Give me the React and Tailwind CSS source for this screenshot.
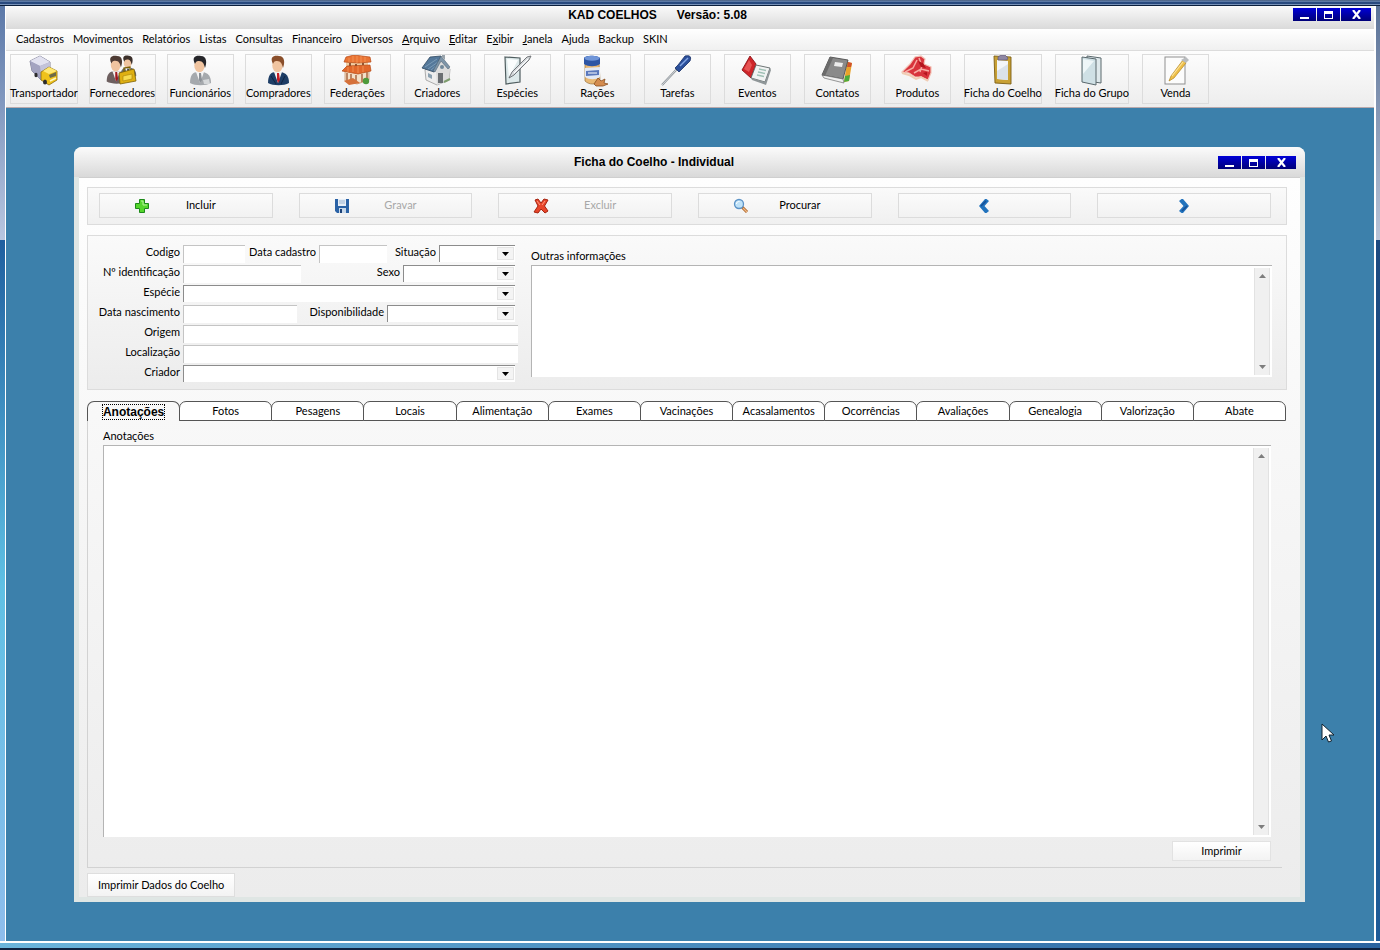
import { useState } from "react";

const svgProps = { width: 32, height: 32, viewBox: "0 0 32 32", "aria-hidden": true };

const TruckIcon = () => (
  <svg {...svgProps}>
    <path d="M2 6 L12 1 L22 7 L22 19 L13 25 L4 16 Z" fill="#a9a9c6" stroke="#6c6c84" strokeWidth=".8" />
    <path d="M2 6 L12 1 L22 7 L12 11 Z" fill="#e2e2f0" />
    <path d="M2 6 L12 11 L13 25 L4 16 Z" fill="#a3a3c0" />
    <path d="M12 11 L22 7 L22 13 L13 18 Z" fill="#c3c3da" />
    <path d="M13 17 L21 12 L29 16 L29 25 L21 30 L13 25 Z" fill="#efc21a" stroke="#8a6a0c" strokeWidth=".8" />
    <path d="M15 16 L21 12 L29 16 L21 19 Z" fill="#ffe873" />
    <path d="M21 20 L28 17 L28 21 L22 23 Z" fill="#6d6a48" />
    <path d="M22 26 L28 23" stroke="#fff6c0" strokeWidth="1.6" />
    <ellipse cx="17" cy="27" rx="2" ry="2.6" fill="#2c2c2c" />
    <ellipse cx="8" cy="20" rx="1.6" ry="2.2" fill="#2c2c2c" />
  </svg>
);

const Person = ({ hair, coat, tie }) => (
  <g>
    <path d="M6 28 C6 20 9 17 14 17 L19 17 C24 18 27 21 27 28 C22 31 11 31 6 28 Z" fill={coat} />
    <path d="M12 17 L16 28 L20 17 Z" fill="#f4f4f4" />
    <path d="M15 18 L17 18 L18 25 L16 28 L15 25 Z" fill={tie} />
    <ellipse cx="15.5" cy="10.5" rx="5.2" ry="6.8" fill="#f0c4a0" />
    <path d="M11 9 C7 1 13 0 17 1 C23 1 23 8 21 13 C20 9 19 6 15 6 C12 6 12 7 11 9 Z" fill={hair} />
  </g>
);

const SuppliersIcon = () => (
  <svg {...svgProps}>
    <g transform="translate(10 0) scale(.75)">
      <Person hair="#3b2f2a" coat="#6b6b6b" tie="#333" />
    </g>
    <g transform="translate(-5 0) scale(.95)">
      <Person hair="#4d3a33" coat="#6d5f5f" tie="#a01820" />
    </g>
    <path d="M13 18 L28 14 L30 26 L14 29 Z" fill="#dfb012" stroke="#7d6208" strokeWidth=".8" />
    <path d="M18 17 L18 13 L24 12 L24 15" fill="none" stroke="#7d6208" strokeWidth="1.3" />
    <path d="M17 21 L26 19 L26 24 L17 26 Z" fill="#f7dc50" stroke="#a98208" strokeWidth=".6" />
  </svg>
);

const EmployeeIcon = () => (
  <svg {...svgProps}>
    <Person hair="#26262a" coat="#a5a9ad" tie="#8b9096" />
    <path d="M19 25 L25 24 L26 29 L20 29 Z" fill="#d5d8da" />
  </svg>
);

const BuyerIcon = () => (
  <svg {...svgProps}>
    <Person hair="#8a4f2b" coat="#1d3d66" tie="#c41c24" />
    <path d="M9 21 L14 29 M23 21 L19 29" stroke="#0e2442" strokeWidth="1" />
  </svg>
);

const FederationIcon = () => (
  <svg {...svgProps}>
    <path d="M4 13 L28 13 L28 25 L16 29 L4 26 Z" fill="#f3e0c8" stroke="#c2865a" strokeWidth=".7" />
    <path d="M5 6 L27 6 L27 13 L5 13 Z" fill="#f0cda4" />
    <path d="M5 2 L13 0 L29 2 L30 7 L17 8 L3 7 Z" fill="#ea7434" stroke="#b64a16" strokeWidth=".7" />
    <path d="M1 16 L6 11 L29 10 L30 16 L17 19 Z" fill="#e2672a" stroke="#b64a16" strokeWidth=".7" />
    <path d="M8 3v4 M12 1v6 M16 1v7 M20 1v7 M24 2v5 M7 12v5 M12 11v6 M17 11v7 M22 11v6" stroke="#f59a5c" strokeWidth=".8" />
    <path d="M6 18v8 M10 19v8 M15 20v8 M21 19v8 M26 17v8" stroke="#a35f38" strokeWidth="1.4" />
    <path d="M9 8v3 M15 9v2 M22 8v2" stroke="#8d4b28" strokeWidth="1.8" />
    <path d="M3 26 L12 23 L19 28 L8 30 Z" fill="#d5713a" />
    <circle cx="25" cy="26" r="3.2" fill="#4d9a3a" />
  </svg>
);

const HouseIcon = () => (
  <svg {...svgProps}>
    <path d="M4 15 L16 5 L29 14 L28 25 L16 30 L5 25 Z" fill="#ededed" stroke="#9b9b9b" strokeWidth=".8" />
    <path d="M15 17 L21 4 L29 14 L28 25 L16 30 Z" fill="#dcdcdc" />
    <path d="M1 13 L9 2 L20 1 L13 17 Z" fill="#54789a" stroke="#2e4860" strokeWidth=".8" />
    <path d="M4 12 L16 4 M7 14 L17 7 M10 15 L16 10" stroke="#83a2bd" strokeWidth=".8" />
    <path d="M20 1 L29 12 L27 14 L20 6 L14 17 L12 16 Z" fill="#7e95a8" stroke="#45586a" strokeWidth=".5" />
    <path d="M21 0h3v5l-3-3z" fill="#9aa4ab" />
    <rect x="17" y="18" width="5" height="10" fill="#6a6e72" />
    <circle cx="21" cy="12" r="2" fill="#6f8799" />
    <path d="M7 18 L11 20 L11 24 L7 22 Z" fill="#8ba1b1" />
    <path d="M23 27 L29 24" stroke="#7d9c6d" strokeWidth="2" />
  </svg>
);

const SpeciesIcon = () => (
  <svg {...svgProps}>
    <path d="M4 2 L19 3 L19 27 L5 29 Z" fill="#dde9ea" stroke="#4f5d5f" strokeWidth="1.2" />
    <path d="M6 4 L17 5 L8 22 Z" fill="#fafdfd" />
    <path d="M8 23 L11 17 L26 2 L30 1 L28 5 L13 20 Z" fill="#d7dbde" stroke="#65696c" strokeWidth=".9" />
    <path d="M13 18 L27 4" stroke="#fff" strokeWidth="1" />
  </svg>
);

const FeedIcon = () => (
  <svg {...svgProps}>
    <path d="M4 8 L18 8 L19 26 C15 30 8 30 4 26 Z" fill="#e9b873" stroke="#96703b" strokeWidth=".7" />
    <path d="M4 13 L19 12 L19 22 C15 25 8 25 4 22 Z" fill="#e3e9f5" />
    <path d="M5 16 L18 15 L18 20 L5 21 Z" fill="#5b78bc" />
    <path d="M7 18h9" stroke="#fff" strokeWidth="1" />
    <path d="M3 3 C4 0 17 0 19 3 L19 9 C15 12 7 12 3 9 Z" fill="#2d55a4" />
    <ellipse cx="11" cy="3.3" rx="7.5" ry="2.5" fill="#6f95d8" />
    <path d="M13 29 L17 23 L20 26 L24 24 L23 28 L27 29 L22 31 L15 31 Z" fill="#d48c4f" stroke="#8a4f20" strokeWidth=".8" />
  </svg>
);

const ScrewdriverIcon = () => (
  <svg {...svgProps}>
    <path d="M1 30 L16 14" stroke="#8a9095" strokeWidth="2" />
    <path d="M1 30 L15 15" stroke="#dde1e4" strokeWidth=".9" />
    <path d="M14 13 L18 17 L21 14 L29 6 C31 1 28 0 24 1 L17 10 Z" fill="#2b4f9a" stroke="#172f66" strokeWidth=".8" />
    <path d="M19 11 L27 3" stroke="#83a6e4" strokeWidth="1.5" />
  </svg>
);

const EventsIcon = () => (
  <svg {...svgProps}>
    <path d="M1 15 L9 1 L15 9 L10 23 Z" fill="#cf2529" stroke="#8c1216" strokeWidth=".9" />
    <path d="M3 14 L8 5 L11 10 L8 17 Z" fill="#e65454" />
    <path d="M10 23 L15 10 L29 13 L24 27 Z" fill="#f1f3f3" stroke="#5f6668" strokeWidth=".9" />
    <path d="M10 23 L24 27 L29 13 L30 15 L25 30 L11 25 Z" fill="#8f9698" />
    <path d="M18 14l7 1.5 M17 17l7 1.5 M16 20l7 1.5" stroke="#9fc0b5" strokeWidth="1.3" />
  </svg>
);

const ContactsIcon = () => (
  <svg {...svgProps}>
    <path d="M26 7 L31 8 L28 26 L23 27 Z" fill="#e9a32a" />
    <path d="M27 7 L31 8 L30 12 L26 12 Z" fill="#d0522c" />
    <path d="M24 21 L29 20 L28 26 L23 27 Z" fill="#4dab3a" />
    <path d="M9 2 L27 5 L22 24 L1 20 Z" fill="#8a8a8a" stroke="#4d4d4d" strokeWidth=".9" />
    <path d="M1 20 L22 24 L23 28 L3 23 Z" fill="#f0f0f0" stroke="#6d6d6d" strokeWidth=".7" />
    <path d="M9 2 L12 3 L4 21 L1 20 Z" fill="#6b6b6b" />
    <path d="M14 7 L22 8 L21 12 L13 11 Z" fill="#ececec" />
  </svg>
);

const MeatIcon = () => (
  <svg {...svgProps}>
    <path d="M1 17 L9 9 L14 2 L20 1 L24 4 L23 9 L30 12 L30 18 L27 25 L20 22 L14 22 L8 18 Z" fill="#d8343c" stroke="#f3c3b6" strokeWidth="1.2" />
    <path d="M4 17 L12 13 L16 5 M18 3 L21 11 L19 17 M13 18 L20 14 L28 16" fill="none" stroke="#f7aaa2" strokeWidth="1.5" />
    <path d="M1 18 L8 20 L15 24 L20 22 L27 26" fill="none" stroke="#f0cdb4" strokeWidth="2" />
    <path d="M17 6 L22 8 L25 13 L20 12 Z M22 18 L26 17 L26 21 Z" fill="#b3151d" />
  </svg>
);

const ClipboardIcon = () => (
  <svg {...svgProps}>
    <path d="M7 1 L24 2 L24 29 L8 28 Z" fill="#c8a034" stroke="#7c5d14" strokeWidth=".9" />
    <path d="M10 5 L21 6 L21 25 L10 24 Z" fill="#f3f5f8" />
    <path d="M10 16 L21 9 L21 25 L10 24 Z" fill="#dbe2ea" />
    <path d="M11 2 L14 0 L18 0 L21 3 L20 5 L11 5 Z" fill="#8f87a3" stroke="#5f5874" strokeWidth=".7" />
  </svg>
);

const GroupIcon = () => (
  <svg {...svgProps}>
    <path d="M11 1 L25 3 L25 28 L11 26 Z" fill="#dfe9ec" stroke="#5a686d" strokeWidth="1" />
    <path d="M6 2 L20 4 L20 30 L6 27 Z" fill="#cfe0e5" stroke="#5a686d" strokeWidth="1" />
    <path d="M7 4 L18 6 L7 19 Z" fill="#eef6f8" />
  </svg>
);

const SaleIcon = () => (
  <svg {...svgProps}>
    <rect x="5" y="2" width="20" height="27" fill="#fcfcfc" stroke="#8f8f8f" />
    <path d="M9 26 L11 21 L23 5 L26 8 L14 23 Z" fill="#eebf48" stroke="#b28420" strokeWidth=".7" />
    <path d="M21 5 L26 2 L29 5 L26 8 Z" fill="#b9bcbf" />
    <path d="M12 21 L23 7" stroke="#fbe39c" strokeWidth="1.2" />
  </svg>
);

const PlusIcon = () => (
  <svg width="16" height="16" viewBox="0 0 16 16" aria-hidden="true">
    <path d="M5.5 1.5h5v4h4v5h-4v4h-5v-4h-4v-5h4z" fill="#55d62c" stroke="#1d8a1a" />
    <path d="M7 3h2v4h4" fill="none" stroke="#b5f59a" />
  </svg>
);

const SaveIcon = () => (
  <svg width="16" height="16" viewBox="0 0 16 16" aria-hidden="true">
    <path d="M1 1h14v14H3l-2-2z" fill="#2a62a6" />
    <path d="M4 1h8v7H4z" fill="#e6eef7" />
    <path d="M5 3h6M5 5h6" stroke="#9bb4d2" />
    <path d="M5 10h7v5H5z" fill="#c9d9ea" />
    <path d="M6 11h2v4H6z" fill="#1b4177" />
  </svg>
);

const DeleteIcon = () => (
  <svg width="16" height="16" viewBox="0 0 16 16" aria-hidden="true">
    <path d="M2 2l3-1 3 4 3-4 4 1-3.5 6 3.5 5-3 2-4-4-3 4-4-1 4-6z" fill="#e8452a" stroke="#a4230f" />
    <path d="M4 3l3 4M12 3l-3 4" stroke="#ff9a80" />
  </svg>
);

const SearchIcon = () => (
  <svg width="16" height="16" viewBox="0 0 16 16" aria-hidden="true">
    <path d="M9 9l5 5" stroke="#a85f20" strokeWidth="3" />
    <path d="M10 10l4 4" stroke="#f0b884" strokeWidth="1.5" />
    <circle cx="6" cy="6" r="4.5" fill="#bfe2f8" stroke="#5c93c7" strokeWidth="1.3" />
    <path d="M3.5 6a2.5 2.5 0 0 1 3-2.5" fill="none" stroke="#fff" />
  </svg>
);

const Chevron = ({ flip }) => (
  <svg width="16" height="16" viewBox="0 0 16 16" aria-hidden="true" className={flip ? "rotate-180" : ""}>
    <path d="M3 8l6-7h1.5L13 3 8.500 8l4.500 5-2.500 2H9z" fill="#2273bd" />
    <path d="M5 8l5-5" stroke="#174f96" strokeWidth="1.5" />
  </svg>
);

const menus = [
  ["Cadastros"], ["Movimentos"], ["Relatórios"], ["Listas"], ["Consultas"], ["Financeiro"], ["Diversos"],
  ["Arquivo", 0], ["Editar", 0], ["Exibir", 1], ["Janela", 0], ["Ajuda"], ["Backup"], ["SKIN"],
];

const shortcutsLeft = [
  ["Transportador", TruckIcon],
  ["Fornecedores", SuppliersIcon],
  ["Funcionários", EmployeeIcon],
  ["Compradores", BuyerIcon],
];

const shortcutsRight = [
  ["Federações", FederationIcon],
  ["Criadores", HouseIcon],
  ["Espécies", SpeciesIcon],
  ["Rações", FeedIcon],
  ["Tarefas", ScrewdriverIcon],
  ["Eventos", EventsIcon],
  ["Contatos", ContactsIcon],
  ["Produtos", MeatIcon],
  ["Ficha do Coelho", ClipboardIcon],
  ["Ficha do Grupo", GroupIcon],
  ["Venda", SaleIcon],
];

const actions = [
  { label: "Incluir", icon: <PlusIcon /> },
  { label: "Gravar", icon: <SaveIcon />, disabled: true },
  { label: "Excluir", icon: <DeleteIcon />, disabled: true },
  { label: "Procurar", icon: <SearchIcon /> },
];

const tabs = [
  "Anotações", "Fotos", "Pesagens", "Locais", "Alimentação", "Exames", "Vacinações",
  "Acasalamentos", "Ocorrências", "Avaliações", "Genealogia", "Valorização", "Abate",
];

const WindowButtons = () => (
  <div className="flex gap-px text-white">
    <button aria-label="Minimizar" className="flex h-[13px] w-[23px] items-center justify-center bg-linear-to-b from-[#0000d8] to-[#000078]">
      <svg width="9" height="9" viewBox="0 0 9 9"><path d="M0 7h9v2H0z" fill="#fff" /></svg>
    </button>
    <button aria-label="Maximizar" className="flex h-[13px] w-[23px] items-center justify-center bg-linear-to-b from-[#0000d8] to-[#000078]">
      <svg width="9" height="9" viewBox="0 0 9 9"><path d="M0 1h9v8H0zM1 4v4h7V4z" fill="#fff" fillRule="evenodd" /></svg>
    </button>
    <button aria-label="Fechar" className="flex h-[13px] w-[30px] items-center justify-center bg-linear-to-b from-[#0000d8] to-[#000078]">
      <svg width="9" height="9" viewBox="0 0 9 9"><path d="M1 0l7 9M8 0L1 9" stroke="#fff" strokeWidth="2.2" /></svg>
    </button>
  </div>
);

const Shortcut = ({ label, Icon }) => (
  <button className="flex h-[50px] min-w-[67px] flex-col items-center border border-[#dcdcdc] whitespace-nowrap">
    <Icon />
    <span className="-mx-px leading-3">{label}</span>
  </button>
);

const Field = ({ id, label, labelClass, className }) => (
  <>
    <label htmlFor={id} className={`shrink-0 pr-[3px] text-right whitespace-nowrap ${labelClass}`}>{label}</label>
    <input id={id} type="text" className={`h-[18px] border-t border-l border-[#c4c4c4] bg-white outline-none ${className}`} />
  </>
);

const SelectField = ({ id, label, labelClass, className }) => (
  <>
    <label htmlFor={id} className={`shrink-0 pr-[3px] text-right whitespace-nowrap ${labelClass}`}>{label}</label>
    <span className={`relative mr-[3px] flex h-[17px] ${className}`}>
      <select id={id} className="w-full appearance-none border-t border-l border-[#8c8c8c] bg-white outline-none" />
      <span className="pointer-events-none absolute inset-y-[2px] right-px flex w-[17px] items-center justify-center border border-[#e4e4e4] bg-[#f4f4f4]">
        <svg width="7" height="4" viewBox="0 0 7 4"><path d="M0 0h7L3.5 4z" fill="#000" /></svg>
      </span>
    </span>
  </>
);

const ScrollBar = () => (
  <div className="my-[2px] mr-[2px] flex w-4 flex-col items-center justify-between border-x border-[#e2e2e2] bg-[#f0f0f0] py-[6px]">
    <svg width="7" height="4" viewBox="0 0 7 4"><path d="M0 4h7L3.5 0z" fill="#7d7d7d" /></svg>
    <svg width="7" height="4" viewBox="0 0 7 4"><path d="M0 0h7L3.5 4z" fill="#7d7d7d" /></svg>
  </div>
);

const RecordForm = () => (
  <section className="mr-[13px] ml-2 flex border border-[#dcdcdc] bg-linear-to-b from-[#fafafa] to-[#ececec] pt-[9px] pr-[14px] pb-[6px]">
    <div className="flex w-[430px] flex-col gap-[2px] leading-[14px]">
      <div className="flex h-[18px]">
        <Field id="codigo" label="Codigo" labelClass="w-[95px]" className="w-[62px]" />
        <Field id="cadastro" label="Data cadastro" labelClass="w-[74px]" className="w-[68px]" />
        <SelectField id="situacao" label="Situação" labelClass="w-[52px]" className="flex-1" />
      </div>
      <div className="flex h-[18px]">
        <Field id="identificacao" label="Nº identificação" labelClass="w-[95px]" className="w-[118px]" />
        <SelectField id="sexo" label="Sexo" labelClass="w-[102px]" className="flex-1" />
      </div>
      <div className="flex h-[18px]">
        <SelectField id="especie" label="Espécie" labelClass="w-[95px]" className="flex-1" />
      </div>
      <div className="flex h-[18px]">
        <Field id="nascimento" label="Data nascimento" labelClass="w-[95px]" className="w-[114px]" />
        <SelectField id="disponibilidade" label="Disponibilidade" labelClass="w-[90px]" className="flex-1" />
      </div>
      <div className="flex h-[18px]">
        <Field id="origem" label="Origem" labelClass="w-[95px]" className="flex-1" />
      </div>
      <div className="flex h-[18px]">
        <Field id="localizacao" label="Localização" labelClass="w-[95px]" className="flex-1" />
      </div>
      <div className="flex h-[18px]">
        <SelectField id="criador" label="Criador" labelClass="w-[95px]" className="flex-1" />
      </div>
    </div>
    <div className="flex flex-1 flex-col pt-1 pb-[6px] pl-[13px]">
      <label htmlFor="outras" className="pb-[2px] leading-[14px]">Outras informações</label>
      <div className="flex flex-1 border-t border-l border-[#b4b4b4] bg-white">
        <textarea id="outras" className="flex-1 resize-none outline-none" />
        <ScrollBar />
      </div>
    </div>
  </section>
);

const RecordWindow = () => {
  const [active, setActive] = useState("Anotações");

  return (
    <div className="flex flex-1 flex-col rounded-t-lg bg-[#dfe6e4]">
      <header className="flex h-[30px] items-center rounded-t-lg bg-linear-to-b from-[#fbfbfb] to-[#d9d9d9] pr-[9px] pl-4">
        <h2 className="flex-1 text-center font-['Liberation_Sans',sans-serif] text-[12px] font-bold">Ficha do Coelho - Individual</h2>
        <WindowButtons />
      </header>

      <div className="mx-[5px] mb-[5px] flex flex-1 flex-col border-t border-[#cfcfcf] bg-linear-to-b from-[#fefefe] to-[#ececec]">
        <div className="mt-[9px] mr-[13px] ml-2 grid grid-cols-6 border border-[#dcdcdc] bg-linear-to-b from-[#fafafa] to-[#f0f0f0] pt-[5px] pb-[6px]">
          {actions.map((a) => (
            <button
              key={a.label}
              disabled={a.disabled}
              className="mr-[15px] ml-[11px] flex h-[25px] items-center border border-[#dcdcdc] bg-linear-to-b from-[#fbfbfb] to-[#f2f2f2] pl-[34px] disabled:text-[#a8a8a8]"
            >
              {a.icon}
              <span className="flex-1 pr-5 text-center">{a.label}</span>
            </button>
          ))}
          <button aria-label="Anterior" className="mr-[15px] ml-[11px] flex h-[25px] items-center justify-center border border-[#dcdcdc] bg-linear-to-b from-[#fbfbfb] to-[#f2f2f2]">
            <Chevron />
          </button>
          <button aria-label="Próximo" className="mr-[15px] ml-[11px] flex h-[25px] items-center justify-center border border-[#dcdcdc] bg-linear-to-b from-[#fbfbfb] to-[#f2f2f2]">
            <Chevron flip />
          </button>
        </div>

        <div className="h-[10px]" />
        <RecordForm />

        <div role="tablist" className="mt-[11px] mr-[15px] ml-2 flex">
          {tabs.map((tab) => (
            <button
              key={tab}
              role="tab"
              aria-selected={tab === active}
              onClick={() => setActive(tab)}
              className={
                tab === active
                  ? "-mr-px h-5 flex-1 rounded-t-[7px] border border-b-0 border-[#555] font-['Liberation_Sans',sans-serif] text-[12px] font-bold"
                  : "-mr-px h-5 flex-1 rounded-t-[7px] border border-[#555] bg-white"
              }
            >
              <span className={tab === active ? "outline-1 outline-dotted outline-black" : ""}>{tab}</span>
            </button>
          ))}
        </div>

        <div role="tabpanel" className="mr-[18px] ml-2 flex flex-1 flex-col border-b border-l border-[#d2d2d2] pr-[11px] pb-[6px] pl-[15px]">
          <label htmlFor="anotacoes" className="pt-[7px] pb-px leading-4">{active}</label>
          <div className="flex flex-1 border-t border-l border-[#b4b4b4] bg-white">
            <textarea id="anotacoes" className="flex-1 resize-none outline-none" />
            <ScrollBar />
          </div>
          <button className="mt-1 h-5 w-[99px] self-end border border-[#e2e2e2] bg-linear-to-b from-white to-[#f3f3f3]">
            Imprimir
          </button>
        </div>

        <button className="mt-[5px] ml-2 h-6 self-start border border-[#dedede] bg-linear-to-b from-white to-[#f3f3f3] px-[10px]">
          Imprimir Dados do Coelho
        </button>
      </div>
    </div>
  );
};

const App = () => (
  <div className="flex min-h-screen flex-col bg-[#265c95] font-['Lato','Liberation_Sans',sans-serif] text-[11px] text-black">
    <div className="h-[6px] border-b border-[#0b1f3d] bg-[linear-gradient(#12284d,#8fa9cc_20%,#28497e_40%,#28497e_70%,#9fb6d4)]" />

    <div className="flex flex-1">
      <div className="w-[5px] bg-[linear-gradient(#5b78a8,#b8c6e0_25%,#1f5f9f_25%,#5fc0e4_62%,#8fbdec)]" />
      <div className="flex flex-1 flex-col border-l border-r-2 border-white bg-[#3c80ab]">
        <header className="flex h-[23px] items-start bg-linear-to-b from-[#fafafa] to-[#dadada] pt-[2px] pr-[3px] pl-4">
          <h1 className="flex-1 text-center font-['Liberation_Sans',sans-serif] text-[12px] leading-[14px] font-bold whitespace-pre">{"KAD COELHOS      Versão: 5.08"}</h1>
          <WindowButtons />
        </header>

        <nav className="flex h-[22px] items-center gap-[9px] border-b border-[#dcdcdc] bg-linear-to-b from-white to-[#f0f0f0] pl-[10px]">
          {menus.map(([name, key]) => (
            <button key={name}>
              {key === undefined ? name : (
                <>{name.slice(0, key)}<u>{name[key]}</u>{name.slice(key + 1)}</>
              )}
            </button>
          ))}
        </nav>

        <div className="flex h-[57px] gap-3 border-b border-[#b9a9ac] bg-linear-to-b from-[#fdfdfd] to-[#ededed] pt-[3px] pl-1">
          <div className="flex gap-[11px]">
            {shortcutsLeft.map(([label, Icon]) => (
              <Shortcut key={label} label={label} Icon={Icon} />
            ))}
          </div>
          <div className="flex gap-[13px]">
            {shortcutsRight.map(([label, Icon]) => (
              <Shortcut key={label} label={label} Icon={Icon} />
            ))}
          </div>
        </div>

        <main className="flex flex-1 flex-col pt-[39px] pr-[69px] pb-[39px] pl-[68px]">
          <RecordWindow />
        </main>
      </div>
      <div className="w-1 bg-[linear-gradient(#5b7398,#b9c4d8_25%,#1d4a80_25%,#1f5c98)]" />
    </div>

    <div className="h-[9px] border-t-2 border-b-2 border-t-white border-b-[#0e2240] bg-linear-to-r from-[#6bb5dc] to-[#2a64a0]" />

    <svg width="14" height="20" viewBox="0 0 14 20" aria-hidden="true" className="absolute top-[723px] left-[1321px]">
      <path d="M1 1v16l4-4 2.5 6 3-1-2.5-6h5z" fill="#fff" stroke="#12222e" />
    </svg>
  </div>
);

export default App;
